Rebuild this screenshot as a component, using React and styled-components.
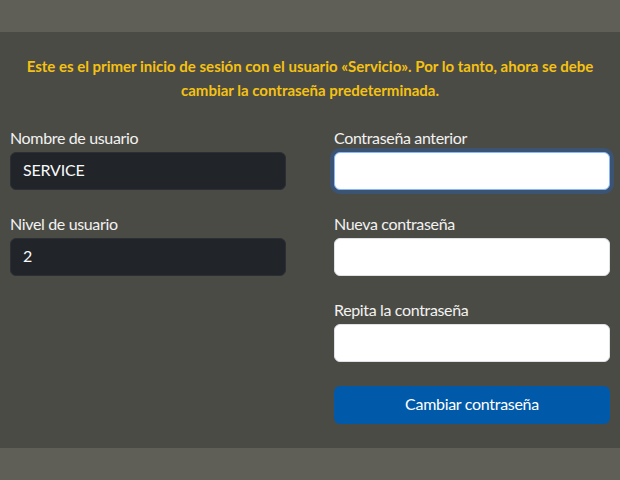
import styled, { createGlobalStyle } from "styled-components";

const GlobalStyle = createGlobalStyle`
  html, body {
    margin: 0;
    padding: 0;
    background-color: #605f57;
    font-family: Lato, "Liberation Sans", sans-serif;
  }
  *, *::before, *::after { box-sizing: border-box; }
`;

const Page = styled.div`
  min-height: 480px;
  padding: 32px 0;
`;

const Panel = styled.main`
  background-color: #4b4b46;
  padding: 24px 10px;
`;

const Notice = styled.p`
  margin: -2px 0 26px;
  color: #f5c211;
  font-weight: 700;
  font-size: 15px;
  line-height: 24px;
  text-align: center;
`;

const Columns = styled.div`
  display: grid;
  grid-template-columns: 1fr 1fr;
  column-gap: 48px;
  align-items: start;
`;

const Column = styled.div`
  display: flex;
  flex-direction: column;
  gap: 24px;
`;

const Field = styled.div`
  display: flex;
  flex-direction: column;
`;

const Label = styled.label`
  color: #f2f2f0;
  font-size: 16px;
  letter-spacing: -0.35px;
  line-height: 20px;
  padding-bottom: 4px;
`;

const Input = styled.input`
  height: 38px;
  width: 100%;
  padding: 4px 12px 8px;
  font-family: inherit;
  font-size: 16px;
  letter-spacing: -0.2px;
  border-radius: 6px;
  outline: none;
  border: 1px solid ${({ $dark }) => ($dark ? "#2b2f33" : "#dee2e6")};
  background-color: ${({ $dark }) => ($dark ? "#212529" : "#ffffff")};
  color: ${({ $dark }) => ($dark ? "#f8f9fa" : "#212529")};

  &:focus {
    border-color: #86b7fe;
    box-shadow: 0 0 0 4px rgba(13, 110, 253, 0.25);
  }
`;

const Button = styled.button`
  height: 38px;
  width: 100%;
  padding: 0 12px 4px;
  border: none;
  border-radius: 6px;
  background-color: #0059a9;
  color: #ffffff;
  font-family: inherit;
  font-size: 16px;
  letter-spacing: -0.3px;
  cursor: pointer;
`;

export default function App() {
  return (
    <>
      <GlobalStyle />
      <Page>
        <Panel>
          <Notice>
            Este es el primer inicio de sesión con el usuario «Servicio». Por lo tanto, ahora se debe
            <br />
            cambiar la contraseña predeterminada.
          </Notice>

          <Columns>
            <Column>
              <Field>
                <Label>Nombre de usuario</Label>
                <Input $dark readOnly value="SERVICE" />
              </Field>
              <Field>
                <Label>Nivel de usuario</Label>
                <Input $dark readOnly value="2" />
              </Field>
            </Column>

            <Column>
              <Field>
                <Label>Contraseña anterior</Label>
                <Input type="password" autoFocus />
              </Field>
              <Field>
                <Label>Nueva contraseña</Label>
                <Input type="password" />
              </Field>
              <Field>
                <Label>Repita la contraseña</Label>
                <Input type="password" />
              </Field>
              <Button type="button">Cambiar contraseña</Button>
            </Column>
          </Columns>
        </Panel>
      </Page>
    </>
  );
}
